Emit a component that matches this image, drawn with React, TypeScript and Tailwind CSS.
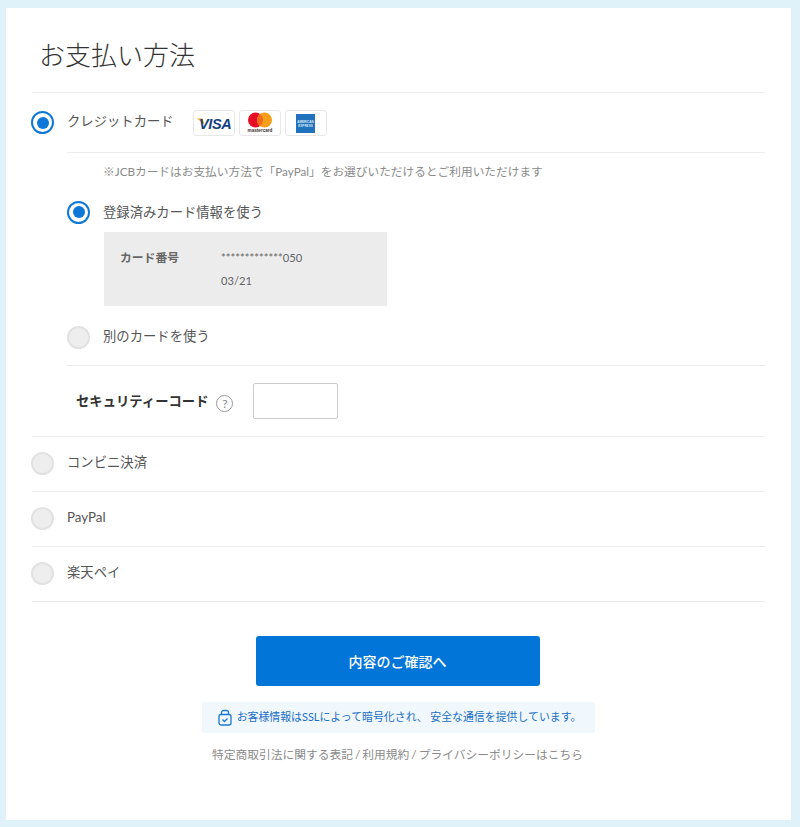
const fontStack = "font-['Lato','Noto_Sans_CJK_JP',sans-serif]";

function Radio({ on }: { on?: boolean }) {
  if (on) {
    return (
      <span className="flex h-[23px] w-[23px] shrink-0 items-center justify-center rounded-full border-[2px] border-[#0e78d8] bg-white">
        <span className="h-[12px] w-[12px] rounded-full bg-[#0e78d8]" />
      </span>
    );
  }
  return <span className="h-[23px] w-[23px] shrink-0 rounded-full border-[2px] border-[#e2e2e2] bg-[#eeeeee]" />;
}

function CardBadge({ children }: { children: React.ReactNode }) {
  return (
    <div className="flex h-[26px] w-[42px] items-center justify-center rounded-[3px] border-[1.5px] border-[#e8e8e8] bg-white">
      {children}
    </div>
  );
}

function VisaLogo() {
  return (
    <svg width="34" height="16" viewBox="0 0 34 16">
      <path d="M0 3.5h5.5l2 6z" fill="#f2a81d" />
      <text x="2" y="13.5" fontFamily="Liberation Sans, sans-serif" fontSize="14.5" fontWeight="700" fontStyle="italic" letterSpacing="-0.4" fill="#14427f">VISA</text>
    </svg>
  );
}

function MasterLogo() {
  return (
    <svg width="26" height="22" viewBox="0 0 26 22">
      <circle cx="8.5" cy="8" r="7.5" fill="#e60f23" />
      <circle cx="17.5" cy="8" r="7.5" fill="#f79e1b" />
      <path d="M13 2a7.5 7.5 0 0 1 0 12a7.5 7.5 0 0 1 0-12z" fill="#f26a1e" />
      <text x="13" y="20" textAnchor="middle" fontFamily="Liberation Sans, sans-serif" fontSize="4.6" fontWeight="700" fill="#3a3230">mastercard</text>
    </svg>
  );
}

function AmexLogo() {
  return (
    <svg width="19" height="19" viewBox="0 0 19 19">
      <rect width="19" height="19" fill="#1f72bb" />
      <text x="9.5" y="8.8" textAnchor="middle" fontFamily="Liberation Sans, sans-serif" fontSize="3.1" fontWeight="700" fill="#d7e8f5">AMERICAN</text>
      <text x="9.5" y="12.8" textAnchor="middle" fontFamily="Liberation Sans, sans-serif" fontSize="3.1" fontWeight="700" fill="#d7e8f5">EXPRESS</text>
    </svg>
  );
}

function Method({ label }: { label: string }) {
  return (
    <div className="flex h-[55px] items-center gap-[13px] border-b border-[#ebebeb] pb-[2px]">
      <span className="ml-[-1px] flex">
        <Radio />
      </span>
      <span className="text-[13.33px] text-[#555555]">{label}</span>
    </div>
  );
}

export default function App() {
  return (
    <div className={`${fontStack} h-[827px] w-[800px] overflow-hidden bg-[#dff2fa] pt-[8px] pr-[9px] pb-[7px] pl-[6px]`}>
      <div className="h-[812px] bg-white px-[25px]">
        <div className="mx-[1px] flex h-[85px] items-center border-b border-[#ebebeb] pt-[10px] pl-[7px]">
          <h1 className="text-[26px] font-light text-[#333333]">お支払い方法</h1>
        </div>

        {/* credit card */}
        <div className="flex h-[59px] items-center">
          <Radio on />
          <span className="mb-[4px] ml-[13px] text-[13.33px] leading-[20px] text-[#555555]">クレジットカード</span>
          <div className="mt-[1px] ml-[19px] flex gap-[4px]">
            <CardBadge>
              <VisaLogo />
            </CardBadge>
            <CardBadge>
              <MasterLogo />
            </CardBadge>
            <CardBadge>
              <AmexLogo />
            </CardBadge>
          </div>
        </div>

        <div className="mr-[1px] ml-[36px]">
          <div className="h-[37px] border-t border-[#ebebeb] pt-[9px] pl-[36px] text-[11.7px] leading-[18px] text-[#8a8a8a]">
            ※JCBカードはお支払い方法で「PayPal」をお選びいただけるとご利用いただけます
          </div>

          <div className="flex h-[46px] items-center gap-[13px]">
            <Radio on />
            <span className="mt-[1px] text-[13.33px] text-[#555555]">登録済みカード情報を使う</span>
          </div>

          <div className="mt-[-3px] ml-[37px] flex h-[74px] w-[283px] bg-[#ececec] pt-[14px] pl-[16px] text-[11.8px] leading-[23px] text-[#666666]">
            <span className="w-[101px] font-bold">カード番号</span>
            <div className="text-[11.2px]">
              <div>*************050</div>
              <div>03/21</div>
            </div>
          </div>

          <div className="flex h-[60px] items-center gap-[13px] border-b border-[#ebebeb] pt-[3px]">
            <Radio />
            <span className="text-[13.33px] text-[#555555]">別のカードを使う</span>
          </div>

          <div className="flex h-[70px] items-center pl-[9px]">
            <span className="mt-[2px] text-[13.33px] font-bold text-[#333333]">セキュリティーコード</span>
            <span className="mt-[5px] ml-[8px] flex h-[17px] w-[17px] items-center justify-center rounded-full border border-[#999999] text-[12px] text-[#888888]">?</span>
            <div className="ml-[20px] h-[36px] w-[85px] rounded-[2px] border border-[#cccccc] bg-white" />
          </div>
        </div>

        <div className="mx-[1px] border-t border-[#ebebeb]">
          <Method label="コンビニ決済" />
          <Method label="PayPal" />
          <Method label="楽天ペイ" />
        </div>

        <div className="mt-[34px] flex flex-col items-center">
          <button className="mr-[2px] h-[50px] w-[284px] rounded-[3px] bg-[#0275d8] text-[14px] font-medium text-white">内容のご確認へ</button>
          <div className="mt-[16px] flex h-[31px] w-[393px] items-center justify-center gap-[5px] rounded-[3px] bg-[#f0f7fd] pl-[2px] text-[10.9px] text-[#1a6fc4]">
            <svg width="14" height="17" viewBox="0 0 14 17" fill="none" stroke="#1a78d2" strokeWidth="1.3">
              <rect x="1" y="5.5" width="12" height="10.5" rx="2" />
              <path d="M3.5 5.5V3.5a2 2 0 0 1 2-2h3a2 2 0 0 1 2 2v2" />
              <path d="M4.5 10.5l2 2 3-3" />
            </svg>
            <span>お客様情報はSSLによって暗号化され、 安全な通信を提供しています。</span>
          </div>
          <p className="mt-[13px] mr-[2px] text-[11.75px] leading-[18px] text-[#8a8a8a] [word-spacing:-1px]">特定商取引法に関する表記 / 利用規約 / プライバシーポリシーはこちら</p>
        </div>
      </div>
    </div>
  );
}
